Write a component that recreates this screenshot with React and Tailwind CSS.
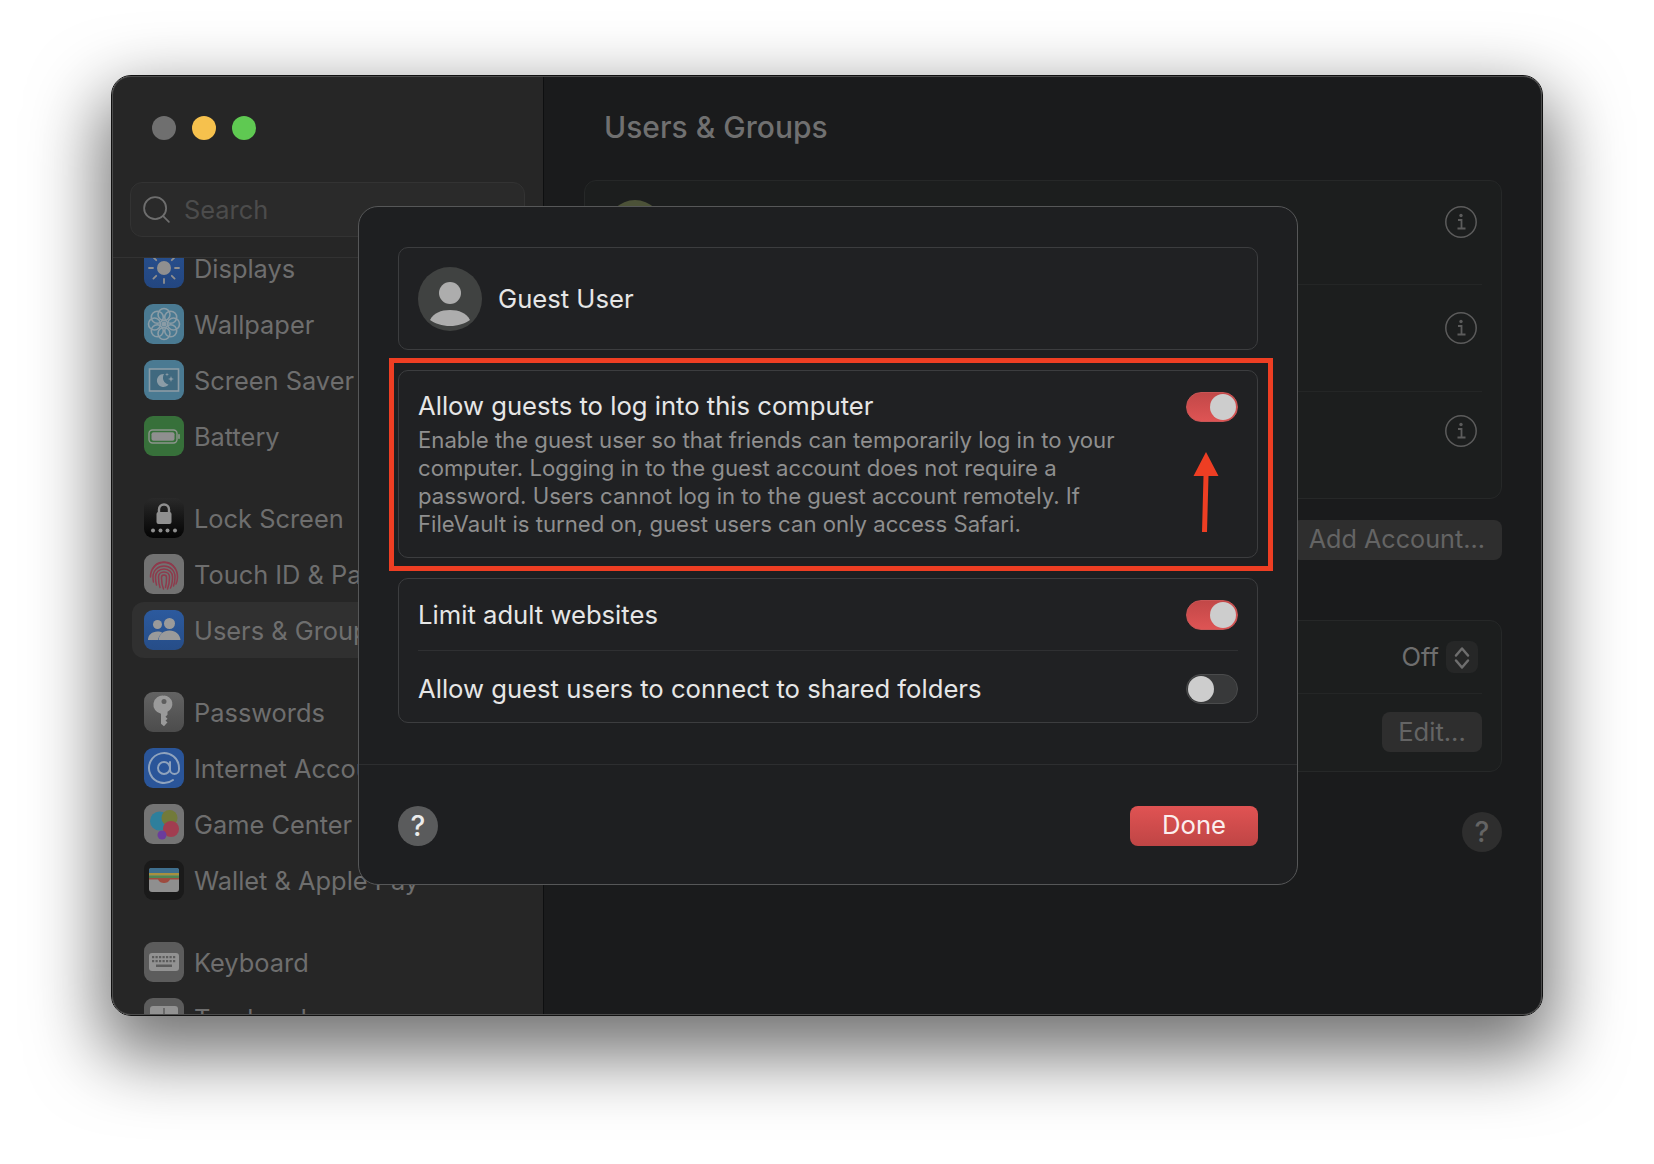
import { AtSign, Search } from "lucide-react";

function Tile({ className, children }) {
  return (
    <div className={`w-10 h-10 shrink-0 rounded-[9px] flex items-center justify-center overflow-hidden ${className}`}>
      <svg viewBox="0 0 40 40" className="w-10 h-10">
        {children}
      </svg>
    </div>
  );
}

const DisplaysIcon = () => (
  <Tile className="bg-gradient-to-b from-[#27508f] to-[#234680]">
    <circle cx="20" cy="20" r="7" fill="#8f8f8f" />
    <g stroke="#8f8f8f" strokeWidth="1.8" strokeLinecap="round">
      <path d="M20 5v4M20 31v4M5 20h4M31 20h4M9.400 9.400l2.800 2.800M27.800 27.800l2.800 2.800M9.400 30.600l2.800-2.800M27.800 12.200l2.800-2.800" />
    </g>
  </Tile>
);

const WallpaperIcon = () => (
  <Tile className="bg-[#4a7a92]">
    <g fill="none" stroke="#8b9ca6" strokeWidth="1.6">
      {[0, 45, 90, 135, 180, 225, 270, 315].map((a) => (
        <circle key={a} cx="20" cy="10.500" r="6" transform={`rotate(${a} 20 20)`} />
      ))}
    </g>
    <circle cx="20" cy="20" r="2.500" fill="#8b9ca6" />
  </Tile>
);

const ScreenSaverIcon = () => (
  <Tile className="bg-[#4a7a92]">
    <rect x="5.500" y="9" width="29" height="22" fill="#40697f" stroke="#8b9ca6" strokeWidth="1.6" />
    <path d="M20 14a6.500 6.500 0 1 0 4.500 10.500a7 7 0 0 1-4.500-10.500z" fill="#8b9ca6" />
    <path d="M27 16l.8 2.200 2.200.8-2.200.8-.8 2.200-.8-2.200-2.200-.8 2.200-.8zM23 12.500l.5 1.500 1.500.5-1.500.5-.5 1.500-.5-1.500-1.500-.5 1.500-.5z" fill="#8b9ca6" />
  </Tile>
);

const BatteryIcon = () => (
  <Tile className="bg-[#37703a]">
    <rect x="5" y="14" width="28" height="13" rx="3.500" fill="none" stroke="#8d958d" strokeWidth="1.4" />
    <rect x="7.500" y="16.200" width="23" height="8.600" rx="2" fill="#8f8f8f" />
    <rect x="34.200" y="18" width="1.600" height="5" rx="0.800" fill="#8d958d" />
  </Tile>
);

const LockIcon = () => (
  <Tile className="bg-gradient-to-b from-[#2a2a2a] to-[#050505]">
    <path d="M15 15v-3.500a5 5 0 0 1 10 0V15" fill="none" stroke="#8f8f8f" strokeWidth="2.400" />
    <rect x="12.500" y="14" width="15" height="12" rx="2" fill="#8f8f8f" />
    {[9, 16.500, 23.500, 31].map((x) => (
      <circle key={x} cx={x} cy="32.500" r="2" fill="#8f8f8f" />
    ))}
  </Tile>
);

const TouchIdIcon = () => (
  <Tile className="bg-[#727272]">
    <g fill="none" stroke="#8e3a4c" strokeWidth="1.500" strokeLinecap="round">
      <path d="M8.500 15a13 13 0 0 1 23 0" />
      <path d="M6.500 23c0-9 6-14.500 13.500-14.500S33.500 14 33.500 23c0 3-.5 5-1.500 7" />
      <path d="M9.500 28c-.5-2-.5-3.500-.5-5 0-6.500 5-11 11-11s11 4.500 11 11c0 3-.3 6-1.500 9" />
      <path d="M12.500 31c-.8-3-1-5.500-1-8 0-4.500 3.500-8 8.500-8s8.500 3.500 8.500 8c0 4-.5 8-2 11" />
      <path d="M16 33.500c-1-3-1.500-7-1.500-10.500 0-3 2.500-5 5.500-5s5.500 2 5.500 5c0 5-.8 9-2 12" />
      <path d="M20 21c-1.500 0-2.500 1-2.500 2.500 0 4 .5 8 2 11.500M20 21c1.500 0 2.500 1 2.500 2.500 0 4-.3 7.500-1 10" />
    </g>
  </Tile>
);

const UsersIcon = () => (
  <Tile className="bg-gradient-to-b from-[#2c5a9e] to-[#264d88]">
    <circle cx="13.500" cy="14.500" r="4.500" fill="#9a9a9a" />
    <path d="M4 30c0-5 4-8.500 9.500-8.500 2 0 3.500.4 5 1.200-2.500 1.800-4 4.300-4.500 7.300z" fill="#9a9a9a" />
    <circle cx="25.500" cy="13.500" r="5.500" fill="#9a9a9a" />
    <path d="M14.500 30c.5-5.500 5-9.500 11-9.500s10.500 4 11 9.500z" fill="#9a9a9a" />
  </Tile>
);

const PasswordsIcon = () => (
  <Tile className="bg-gradient-to-b from-[#636363] to-[#4c4c4c]">
    <path
      fillRule="evenodd"
      d="M20 3.500a8.500 8.500 0 0 1 3.500 16.200v3l-2 2 2 2-2 2 2 1.500-3.500 4-3-2.500v-10a8.500 8.500 0 0 1 3-18zm0 3.500a2.500 2.500 0 1 0 0 5 2.500 2.500 0 0 0 0-5z"
      fill="#9a9a9a"
    />
  </Tile>
);

const GameCenterIcon = () => (
  <Tile className="bg-[#747474]">
    <circle cx="15.500" cy="17" r="9.500" fill="#2e7f9c" />
    <circle cx="25.500" cy="14" r="8" fill="#727a3a" />
    <circle cx="27" cy="25" r="8" fill="#a13d50" />
    <circle cx="18" cy="31" r="4.500" fill="#6b3c9c" />
  </Tile>
);

const WalletIcon = () => (
  <Tile className="bg-[#1a1a1a]">
    <rect x="5" y="8" width="30" height="24" rx="3" fill="#8f8f8f" />
    <path d="M5 10a2 2 0 0 1 2-2h26a2 2 0 0 1 2 2v3H5z" fill="#3f6f8e" />
    <rect x="5" y="13" width="30" height="2.500" fill="#a8903f" />
    <rect x="5" y="15.500" width="30" height="2.500" fill="#4f8552" />
    <path d="M5 18h30v1.500H26c-1 2.500-3.500 3.500-6 3.500s-5-1-6-3.500H5z" fill="#9e4b3f" />
  </Tile>
);

const KeyboardIcon = () => (
  <Tile className="bg-[#5c5c5c]">
    <rect x="5" y="11" width="30" height="18" rx="3" fill="#929292" />
    <g fill="#5c5c5c">
      {[8, 11.500, 15, 18.500, 22, 25.500, 29].map((x) => (
        <rect key={x} x={x} y="14" width="2.200" height="2.200" />
      ))}
      {[8, 11.500, 15, 18.500, 22, 25.500, 29].map((x) => (
        <rect key={x} x={x} y="18" width="2.200" height="2.200" />
      ))}
      <rect x="12" y="22.500" width="16" height="2.500" />
    </g>
  </Tile>
);

const TrackpadIcon = () => (
  <Tile className="bg-[#5c5c5c]">
    <rect x="6" y="8" width="28" height="24" rx="3" fill="#929292" />
    <path d="M20 10v9" stroke="#5c5c5c" strokeWidth="1.500" />
  </Tile>
);

function SidebarItem({ icon, label, active }) {
  return (
    <div className={`h-14 flex items-center gap-[10px] pl-3 rounded-xl whitespace-nowrap ${active ? "bg-[#303030]" : ""}`}>
      {icon}
      <span className="mt-0.5">{label}</span>
    </div>
  );
}

function Sidebar() {
  return (
    <aside className="w-[432px] h-full shrink-0 bg-[#262626] border-r border-r-[#0e0f10] flex flex-col overflow-hidden text-[25.4px]">
      <div className="h-[106px] shrink-0 flex items-start gap-4 pl-10 pt-10">
        <span className="w-6 h-6 rounded-full bg-[#6f6f6f]" />
        <span className="w-6 h-6 rounded-full bg-[#f6c14d]" />
        <span className="w-6 h-6 rounded-full bg-[#5fc952]" />
      </div>
      <div className="mx-[18px] h-[55px] shrink-0 rounded-xl border border-[#333333] bg-[#2a2a2a] flex items-center pl-[9px] gap-[11px] text-[#4c4c4c]">
        <Search className="w-[33px] h-[33px] text-[#6e6e6e]" strokeWidth={1.3} />
        <span className="mt-0.5">Search</span>
      </div>
      <div className="mt-5 border-t border-[#323232] flex-1 overflow-hidden px-5 text-[#6e6e6e]">
        <div className="-mt-[18px]">
          <SidebarItem icon={<DisplaysIcon />} label="Displays" />
          <SidebarItem icon={<WallpaperIcon />} label="Wallpaper" />
          <SidebarItem icon={<ScreenSaverIcon />} label="Screen Saver" />
          <SidebarItem icon={<BatteryIcon />} label="Battery" />
          <div className="h-[26px]" />
          <SidebarItem icon={<LockIcon />} label="Lock Screen" />
          <SidebarItem icon={<TouchIdIcon />} label="Touch ID & Password" />
          <SidebarItem icon={<UsersIcon />} label="Users & Groups" active />
          <div className="h-[26px]" />
          <SidebarItem icon={<PasswordsIcon />} label="Passwords" />
          <SidebarItem
            icon={
              <div className="w-10 h-10 shrink-0 rounded-[9px] bg-[#2a5599] flex items-center justify-center">
                <AtSign className="w-9 h-9 text-[#8fa3bd]" strokeWidth={1.3} />
              </div>
            }
            label="Internet Accounts"
          />
          <SidebarItem icon={<GameCenterIcon />} label="Game Center" />
          <SidebarItem icon={<WalletIcon />} label="Wallet & Apple Pay" />
          <div className="h-[26px]" />
          <SidebarItem icon={<KeyboardIcon />} label="Keyboard" />
          <SidebarItem icon={<TrackpadIcon />} label="Trackpad" />
        </div>
      </div>
    </aside>
  );
}

function InfoIcon() {
  return (
    <svg viewBox="0 0 32 32" className="w-8 h-8 text-[#5c5c5c]" fill="none" stroke="currentColor">
      <circle cx="16" cy="16" r="15.200" strokeWidth="1.500" />
      <circle cx="16" cy="9.500" r="1.700" fill="currentColor" stroke="none" />
      <path d="M13 14h3.500v8.500M12.500 22.500h8" strokeWidth="1.800" />
    </svg>
  );
}

function Background() {
  return (
    <main className="flex-1 h-full bg-[#1a1b1c] pl-10 pr-10 text-[#6b6b6b] text-[25.6px]">
      <h1 className="h-[104px] pt-[29px] pl-5 text-[30px] leading-[44px] font-medium text-[#707070]">Users & Groups</h1>
      <section className="h-[319px] rounded-xl border border-[#262828] bg-[#1c1e1e] flex flex-col relative">
        <div className="h-[104px] flex items-start justify-end pt-[25px] pr-[5px] ml-5 mr-[19px] border-b border-[#242626]">
          <InfoIcon />
        </div>
        <div className="h-[107px] flex items-start justify-end pt-[27px] pr-[5px] ml-5 mr-[19px] border-b border-[#242626]">
          <InfoIcon />
        </div>
        <div className="flex-1 flex items-start justify-end pt-[23px] pr-[5px] ml-5 mr-[19px]">
          <InfoIcon />
        </div>
        <div className="absolute left-[22px] top-[19px] w-14 h-14 rounded-full bg-[#4c5238]" />
      </section>
      <div className="mt-[21px] flex justify-end">
        <button className="w-[210px] h-10 rounded-lg bg-[#2e2e2e] text-[#646464] text-[25.2px] text-right pr-[17px]">Add Account...</button>
      </div>
      <section className="mt-[60px] h-[152px] rounded-xl border border-[#262828] bg-[#1c1e1e]">
        <div className="h-[73px] ml-5 mr-[19px] border-b border-[#242626] flex items-center justify-end gap-[7px] pr-1 text-[#6e6e6e]">
          <span>Off</span>
          <span className="w-8 h-8 rounded-lg bg-[#262727] flex items-center justify-center text-[#6e6e6e]">
            <svg viewBox="0 0 32 32" className="w-8 h-8" fill="none" stroke="currentColor" strokeWidth="2.500" strokeLinecap="round" strokeLinejoin="round">
              <path d="M10 14.500L16 7.500L22 14.500M10 19.500L16 26.500L22 19.500" />
            </svg>
          </span>
        </div>
        <div className="ml-5 mr-[19px] pt-[18px] flex justify-end">
          <button className="w-[100px] h-10 rounded-lg bg-[#2e2e2e] text-[#646464]">Edit...</button>
        </div>
      </section>
      <div className="mt-10 flex justify-end">
        <span className="w-10 h-10 rounded-full bg-[#2e2e2e] text-[#646464] text-[28px] font-medium flex items-center justify-center">?</span>
      </div>
    </main>
  );
}

function Toggle({ on, className = "" }) {
  if (on) {
    return (
      <div className={`w-[52px] h-[30px] shrink-0 rounded-full bg-gradient-to-b from-[#c24848] to-[#de5454] border border-[#c85555] flex items-center justify-end pr-px ${className}`}>
        <span className="w-[26px] h-[26px] rounded-full bg-[#cdcdcd]" />
      </div>
    );
  }
  return (
    <div className={`w-[52px] h-[30px] shrink-0 rounded-full bg-[#38393a] border border-[#4a4b4c] flex items-center pl-px ${className}`}>
      <span className="w-[26px] h-[26px] rounded-full bg-[#cdcdcd]" />
    </div>
  );
}

function Modal() {
  return (
    <div className="absolute left-[246px] top-[130px] w-[940px] h-[679px] rounded-[20px] bg-[#1e1f21] border border-[#565758] flex flex-col text-[#e6e6e6] text-[25.65px]">
      <div className="px-[39px] pt-10 flex flex-col gap-5">
        <div className="h-[103px] rounded-[10px] border border-[#3c3d3f] bg-[#202123] flex items-center pl-[19px] gap-4">
          <svg viewBox="0 0 64 64" className="w-16 h-16 shrink-0">
            <circle cx="32" cy="32" r="32" fill="#404241" />
            <circle cx="32" cy="26" r="11" fill="#adadad" />
            <path d="M12 53c3.500-7 11-10 20-10s16.500 3 20 10c-5 3.500-12 6-20 6s-15-2.500-20-6z" fill="#adadad" />
          </svg>
          <span className="mt-0.5">Guest User</span>
        </div>

        <div className="relative h-[188px] rounded-[10px] border border-[#3c3d3f] bg-[#202123] px-[19px] pt-[19px] flex justify-between">
          <div>
            <div className="leading-8">Allow guests to log into this computer</div>
            <p className="mt-1 text-[22.15px] leading-7 text-[#8f8f8f] whitespace-nowrap">
              Enable the guest user so that friends can temporarily log in to your
              <br />
              computer. Logging in to the guest account does not require a
              <br />
              password. Users cannot log in to the guest account remotely. If
              <br />
              FileVault is turned on, guest users can only access Safari.
            </p>
          </div>
          <Toggle on className="mt-0.5" />
          {/* annotation */}
          <div className="absolute -left-[10px] -top-[13px] w-[884px] h-[213px] border-[5px] border-[#ee3e23] pointer-events-none" />
          <svg viewBox="0 0 30 84" className="absolute left-[792px] top-[80px] w-[30px] h-[84px]">
            <path d="M15 1L27.500 25H17.500L16 81H11L12.500 25H2.500z" fill="#ee3e23" />
          </svg>
        </div>

        <div className="h-[145px] rounded-[10px] border border-[#3c3d3f] bg-[#202123] px-[19px]">
          <div className="h-[72px] border-b border-[#2f3032] flex items-center justify-between">
            <span className="mt-0.5">Limit adult websites</span>
            <Toggle on />
          </div>
          <div className="h-[71px] pt-1 flex items-center justify-between">
            <span className="mt-0.5">Allow guest users to connect to shared folders</span>
            <Toggle />
          </div>
        </div>
      </div>

      <div className="mt-[41px] border-t border-[#2d2e30] flex-1 px-[39px] pt-[41px]">
        <div className="flex items-start justify-between">
          <span className="w-10 h-10 rounded-full bg-[#5a5b5c] text-[#ececec] text-[28px] font-medium flex items-center justify-center">?</span>
          <button className="w-[128px] h-10 pb-0.5 rounded-lg bg-gradient-to-b from-[#e05353] to-[#bf4545] text-[#fbeeee]">Done</button>
        </div>
      </div>
    </div>
  );
}

export default function App() {
  return (
    <div className="w-[1654px] h-[1164px] bg-white pl-[111px] pt-[75px] overflow-hidden font-['Inter','Noto_Sans',sans-serif]">
      <div className="relative w-[1432px] h-[941px] rounded-[20px] shadow-[0_30px_70px_10px_rgba(0,0,0,0.55)] border border-[#111111]">
        <div className="w-full h-full rounded-[19px] overflow-hidden flex">
          <Sidebar />
          <Background />
        </div>
        <div className="absolute inset-0 rounded-[19px] border border-[#4c4c4c] pointer-events-none" />
        <Modal />
      </div>
    </div>
  );
}
